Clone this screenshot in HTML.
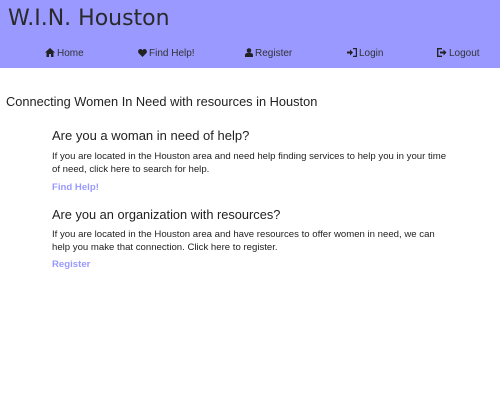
<!DOCTYPE html>
<html><head><style>
body{margin:0;width:500px;height:400px;background:#fff;font-family:"Liberation Sans",Arial,sans-serif;color:#222;position:relative;overflow:hidden}
.hdr{position:absolute;left:0;top:0;width:500px;height:68px;background:#9999ff}
.t{position:absolute;left:8px;top:6px;font-family:"DejaVu Sans",sans-serif;font-size:22px;color:#2a2a2a;letter-spacing:0}
.n{position:absolute;top:48px;font-size:10px;color:#333;white-space:nowrap}
.n svg{vertical-align:-1px;margin-right:2px}
.a{position:absolute;white-space:nowrap}
</style></head><body>
<div class="hdr">
<div class="t">W.I.N. Houston</div>
<div class="n" style="left:45px"><svg width="10" height="9" viewBox="0 0 10 9"><path d="M5 0L0 4.5h1.5V9h2.5V6h2v3h2.5V4.5H10z" fill="#222"/></svg>Home</div>
<div class="n" style="left:138px"><svg width="9" height="8" viewBox="0 0 9 8"><path d="M4.5 8L0.5 4C-0.5 2.5 0.5 0 2.5 0 3.5 0 4.2 0.7 4.5 1.3 4.8 0.7 5.5 0 6.5 0 8.5 0 9.5 2.5 8.5 4z" fill="#222"/></svg>Find Help!</div>
<div class="n" style="left:245px"><svg width="8" height="9" viewBox="0 0 8 9"><circle cx="4" cy="2.5" r="2.3" fill="#222"/><path d="M0 9V7c0-1.5 1.5-2.3 4-2.3s4 .8 4 2.3v2z" fill="#222"/></svg>Register</div>
<div class="n" style="left:347px"><svg width="10" height="9" viewBox="0 0 10 9"><path d="M0 3.5h3V1.5l3 3-3 3V5.5H0z" fill="#222"/><path d="M6 0.5h3.5v8H6" fill="none" stroke="#222" stroke-width="1.4"/></svg>Login</div>
<div class="n" style="left:437px"><svg width="10" height="9" viewBox="0 0 10 9"><path d="M5 0.7H0.7v7.6H5" fill="none" stroke="#222" stroke-width="1.4"/><path d="M3 3.5h3.5V1.5l3 3-3 3V5.5H3z" fill="#222"/></svg>Logout</div>
</div>
<div class="a" style="left:6px;top:94px;font-size:12.8px">Connecting Women In Need with resources in Houston</div>
<div class="a" style="left:52px;top:128px;font-size:13px">Are you a woman in need of help?</div>
<div class="a" style="left:52px;top:150px;font-size:9.6px;line-height:13px">If you are located in the Houston area and need help finding services to help you in your time<br>of need, click here to search for help.</div>
<div class="a" style="left:52px;top:182px;font-size:9.6px;font-weight:bold;color:#9999ff">Find Help!</div>
<div class="a" style="left:52px;top:207px;font-size:12.8px">Are you an organization with resources?</div>
<div class="a" style="left:52px;top:228px;font-size:9.6px;line-height:13px">If you are located in the Houston area and have resources to offer women in need, we can<br>help you make that connection. Click here to register.</div>
<div class="a" style="left:52px;top:259px;font-size:9.6px;font-weight:bold;color:#9999ff">Register</div>
</body></html>
